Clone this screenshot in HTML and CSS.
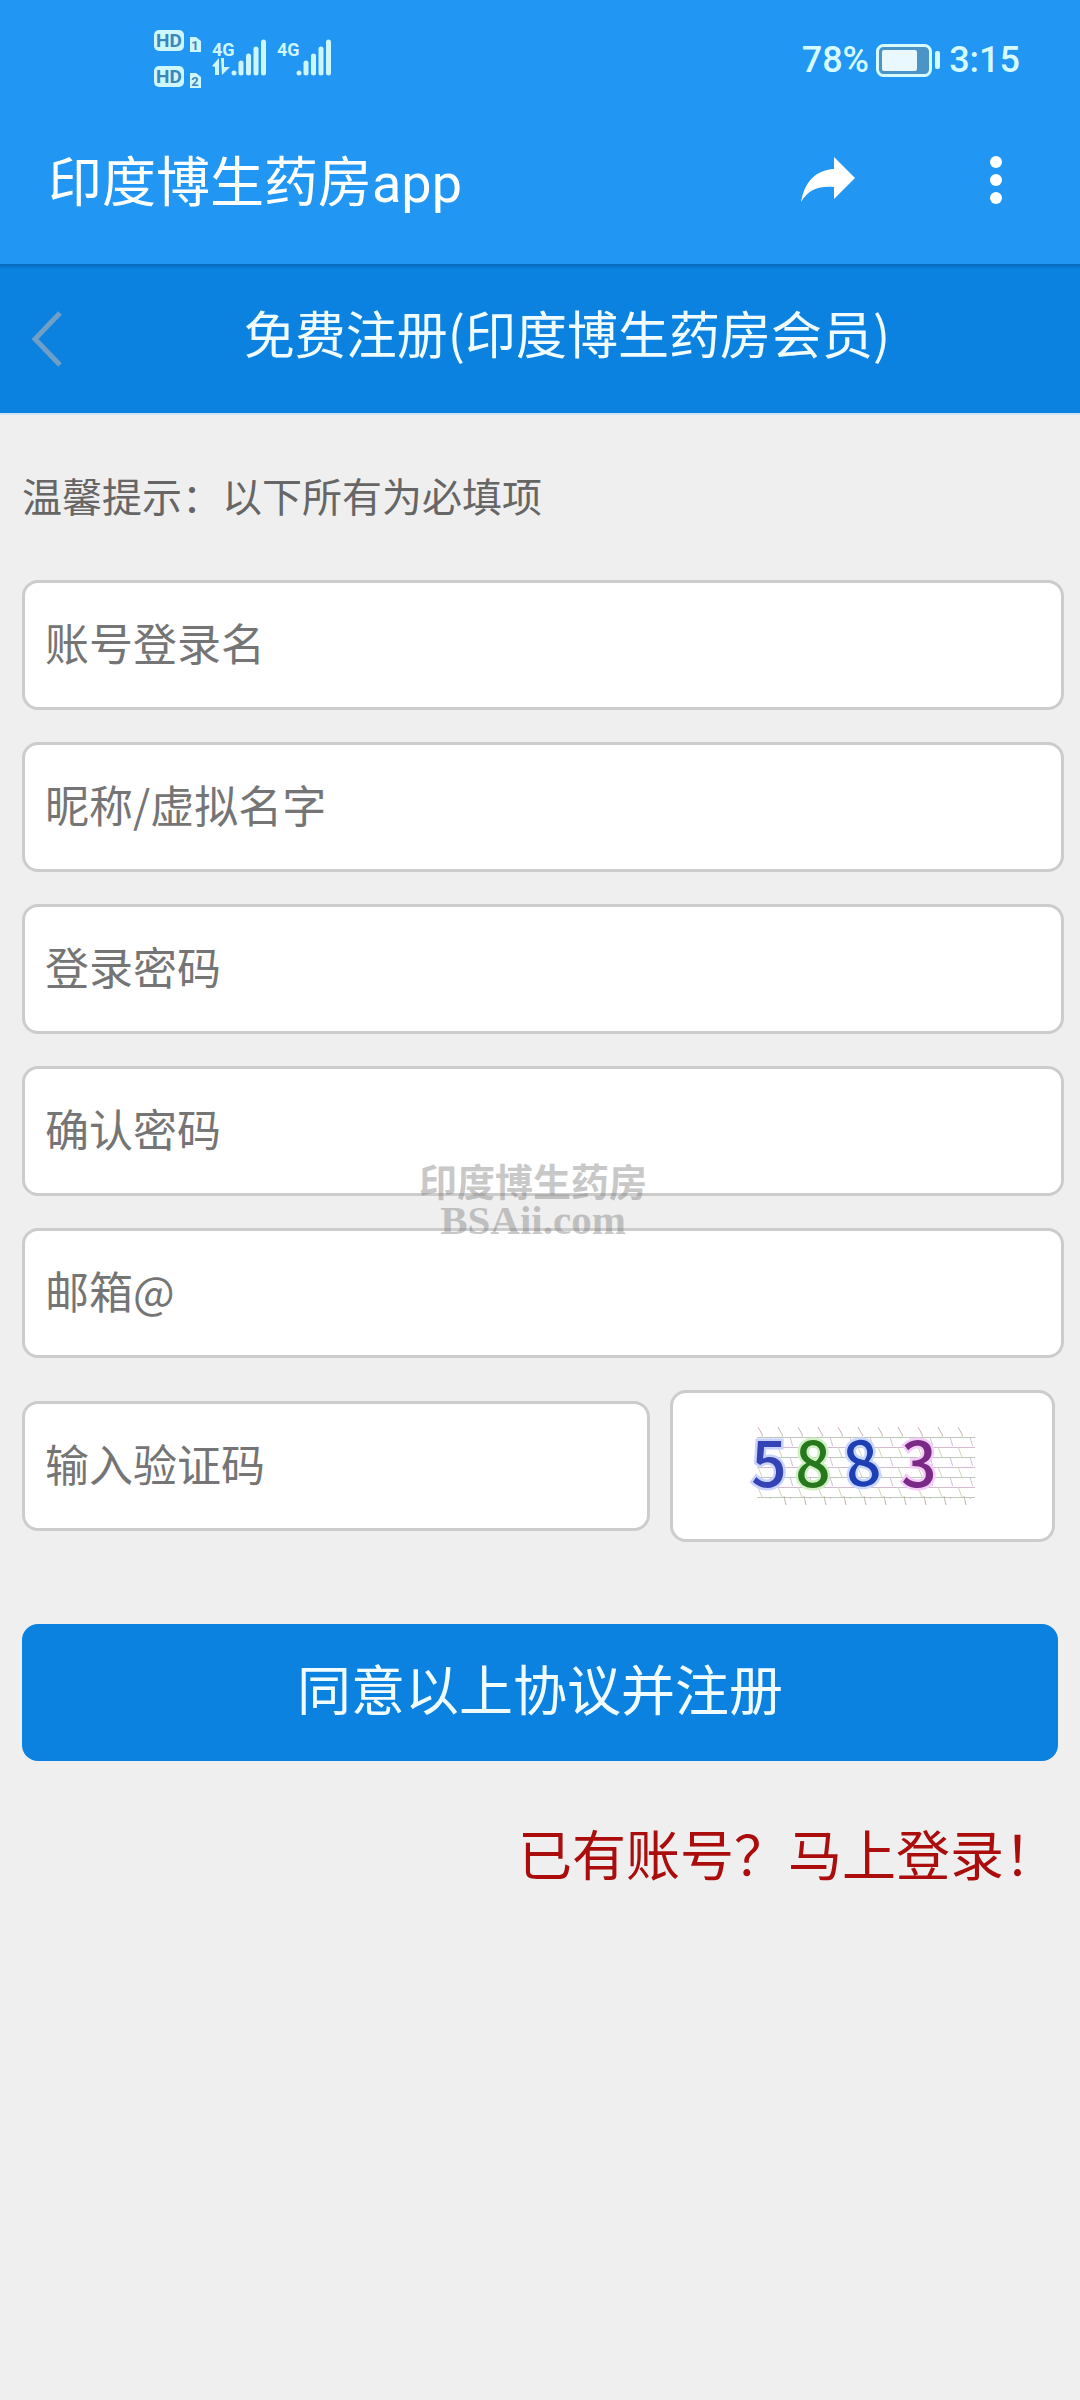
FILE: index.html
```html
<!DOCTYPE html>
<html lang="zh-CN">
<head>
<meta charset="utf-8">
<meta name="viewport" content="width=device-width, initial-scale=1">
<title>印度博生药房app</title>
<link rel="stylesheet" href="styles.css">
</head>
<body>
<header class="top">
  <div class="status">
    <svg class="network" width="180" height="72" viewBox="0 0 180 72" aria-label="HD 4G">
      <g class="pale">
        <rect x="2" y="6" width="30" height="21" rx="5"/>
        <rect x="2" y="42" width="30" height="21" rx="5"/>
        <path d="M38 13h6l5 4v11H38zM38 49h6l5 4v11H38z"/>
      </g>
      <g class="knock">
        <text x="17" y="23" font-size="19">HD</text>
        <text x="17" y="59" font-size="19">HD</text>
        <text x="43" y="26" font-size="13">1</text>
        <text x="43" y="62" font-size="13">2</text>
      </g>
      <g class="signal">
        <text x="60" y="32" font-size="18">4G</text>
        <text x="125" y="32" font-size="18">4G</text>
      </g>
      <g class="bars">
        <path d="M82 49v.1M89 39v10M96.500 32v17M104 25v24M111.500 18v31"/>
        <path d="M147 49v.1M154 39v10M161.500 32v17M169 25v24M176.500 18v31"/>
      </g>
      <path class="pale" d="M60 42l7-8v17h-4v-8zM69 34h3v9h6l-8 8z"/>
    </svg>
    <div class="power">
      <span>78%</span>
      <svg width="66" height="36" viewBox="0 0 66 36" aria-hidden="true">
        <rect x="1.500" y="3.500" width="53" height="30" rx="6" fill="#4b94c8" stroke="#d6fbff" stroke-width="3"/>
        <rect x="6" y="8" width="35" height="21" rx="2" fill="#e9f8ff"/>
        <rect x="59" y="9" width="5" height="18" rx="2" fill="#d6fbff"/>
      </svg>
      <span>3:15</span>
    </div>
  </div>
  <div class="appbar">
    <h1 class="app-title">印度博生药房app</h1>
    <button class="icon-btn" type="button" aria-label="分享">
      <svg width="54" height="46" viewBox="0 0 54 46"><path fill="#fff" d="M33 0L54 21L33 42V30C18 29 8 32 0 45C3 26 14 13 33 12Z"/></svg>
    </button>
    <button class="icon-btn" type="button" aria-label="更多">
      <svg width="12" height="48" viewBox="0 0 12 48" fill="#fff"><circle cx="6" cy="6" r="6"/><circle cx="6" cy="24" r="6"/><circle cx="6" cy="42" r="6"/></svg>
    </button>
  </div>
</header>

<nav class="subbar">
  <a class="back" href="#" aria-label="返回">
    <svg width="30" height="54" viewBox="0 0 30 54"><path d="M28 1L3 27L28 53" fill="none" stroke="#6f9fc6" stroke-width="5"/></svg>
  </a>
  <h2 class="sub-title">免费注册(印度博生药房会员)</h2>
</nav>

<main class="page">
  <p class="tip">温馨提示：以下所有为必填项</p>
  <form class="form">
    <input class="field" type="text" placeholder="账号登录名" aria-label="账号登录名">
    <input class="field" type="text" placeholder="昵称/虚拟名字" aria-label="昵称/虚拟名字">
    <input class="field" type="password" placeholder="登录密码" aria-label="登录密码">
    <input class="field" type="password" placeholder="确认密码" aria-label="确认密码">
    <input class="field" type="email" placeholder="邮箱@" aria-label="邮箱@">
    <div class="verify">
      <input class="field" type="text" placeholder="输入验证码" aria-label="输入验证码">
      <button class="captcha" type="button" aria-label="刷新验证码">
        <svg class="code" width="222" height="80" viewBox="0 0 222 80">
          <defs>
            <pattern id="cells" width="20" height="20" patternUnits="userSpaceOnUse">
              <path d="M0 1.500h20" stroke="#c9a9c6"/>
              <path d="M0 11.500h20" stroke="#a9bda5"/>
              <path d="M2 1l4 10" stroke="#c3cfa8"/>
              <path d="M14 11l3 10" stroke="#c5b0cf"/>
            </pattern>
          </defs>
          <path d="M2 1l5 9M22 1l5 9M42 1l5 9M62 1l5 9M82 1l5 9M102 1l5 9M122 1l5 9M142 1l5 9M162 1l5 9M182 1l5 9M202 1l5 9M28 70l2 9M48 70l2 9M68 70l2 9M88 70l2 9M108 70l2 9M128 70l2 9M148 70l2 9M168 70l2 9M188 70l2 9M208 70l2 9" stroke="#cdb3ad" fill="none"/>
          <rect x="1" y="10" width="218" height="63" fill="url(#cells)" opacity=".8"/>
          <g class="digits">
            <text x="13" y="61" fill="#3343b4" stroke="#c9d2ff">5</text>
            <text x="57" y="61" fill="#27781d" stroke="#d0f0c4">8</text>
            <text x="106" y="60" fill="#1d3fb4" stroke="#c9d6ff" transform="rotate(-10 106 38)">8</text>
            <text x="163" y="61" fill="#7a2a86" stroke="#f3cdf5">3</text>
          </g>
        </svg>
      </button>
    </div>
    <button class="submit" type="submit">同意以上协议并注册</button>
    <a class="login" href="#">已有账号？马上登录！</a>
  </form>
  <div class="watermark" aria-hidden="true">
    <span>印度博生药房</span>
    <span class="domain">BSAii.com</span>
  </div>
</main>
</body>
</html>
```
FILE: styles.css
```css
* {
  box-sizing: border-box;
}

body {
  margin: 0;
  min-height: 100vh;
  background: #efefef;
  font-family: Roboto, "Noto Sans CJK SC", sans-serif;
}

h1, h2, p {
  margin: 0;
  font-weight: 400;
}

button {
  margin: 0;
  padding: 0;
  border: 0;
  background: none;
  font-family: inherit;
}

svg {
  display: block;
  overflow: visible;
}

/* status bar and app bar */
.top {
  background: #2196f3;
  color: #fff;
}

.status {
  display: flex;
  justify-content: space-between;
  padding: 24px 60px 0 152px;
}

.pale {
  fill: #cdf6ff;
}

.knock {
  fill: #3a86bd;
  font-weight: 700;
  text-anchor: middle;
}

.signal {
  fill: #cdf6ff;
  font-weight: 700;
}

.bars {
  stroke: #cdf6ff;
  stroke-width: 5;
  stroke-linecap: round;
}

.power {
  display: flex;
  align-items: center;
  gap: 7px;
  color: #d6fbff;
  font-size: 36px;
  font-weight: 500;
  line-height: 72px;
}

.appbar {
  display: flex;
  align-items: center;
  height: 168px;
  padding: 0 24px 0 48px;
}

.app-title {
  flex: 1;
  padding-top: 8px;
  font-size: 54px;
  line-height: 72px;
}

.icon-btn {
  display: flex;
  align-items: center;
  justify-content: center;
  width: 120px;
  height: 96px;
}

.icon-btn + .icon-btn {
  margin-left: 48px;
}

/* page heading */
.subbar {
  display: flex;
  align-items: center;
  height: 151px;
  padding-right: 26px;
  border-bottom: 2px solid #cfe4f2;
  background: linear-gradient(#0669ba, #0b81e0 5px);
  color: #f0fcff;
}

.back {
  display: flex;
  align-items: center;
  width: 80px;
  height: 100px;
  padding-left: 32px;
}

.sub-title {
  flex: 1;
  padding-bottom: 14px;
  font-family: "Noto Sans CJK SC", sans-serif;
  font-size: 51px;
  line-height: 72px;
  text-align: center;
}

/* registration form */
.page {
  position: relative;
  padding: 0 16px 0 22px;
  font-family: "Noto Sans CJK SC", sans-serif;
}

.tip {
  padding-bottom: 5px;
  color: #666;
  font-size: 40px;
  line-height: 160px;
}

.form {
  display: flex;
  flex-direction: column;
  gap: 32px;
}

.field {
  width: 100%;
  height: 130px;
  padding: 0 20px 6px;
  border: 3px solid #ccc;
  border-radius: 16px;
  background: #fff;
  color: #333;
  font-family: inherit;
  font-size: 44px;
}

.field::placeholder {
  color: #757575;
  opacity: 1;
}

.verify {
  display: grid;
  grid-template-columns: 628fr 385fr;
  align-items: center;
  gap: 20px;
  padding-right: 9px;
}

.captcha {
  display: flex;
  align-items: center;
  justify-content: center;
  height: 152px;
  padding-left: 8px;
  border: 3px solid #ccc;
  border-radius: 16px;
  background: #fff;
}

.digits {
  font-size: 62px;
  font-weight: 500;
  text-anchor: middle;
  paint-order: stroke;
  stroke-width: 5;
}

.submit {
  height: 137px;
  margin: 50px 6px 0 0;
  padding-bottom: 10px;
  border-radius: 16px;
  background: #0b81e0;
  color: #f0fcff;
  font-size: 54px;
}

.login {
  align-self: flex-end;
  margin: 20px 6px 0 0;
  color: #ab0d0d;
  font-size: 54px;
  line-height: 80px;
  text-decoration: none;
}

/* brand mark laid over the form */
.watermark {
  position: absolute;
  top: 745px;
  left: 0;
  right: 14px;
  display: flex;
  flex-direction: column;
  align-items: center;
  color: #787878;
  font-size: 38px;
  font-weight: 700;
  line-height: 40px;
  opacity: .4;
  pointer-events: none;
}

.domain {
  font-family: "Liberation Serif", serif;
  font-size: 41px;
}
```
